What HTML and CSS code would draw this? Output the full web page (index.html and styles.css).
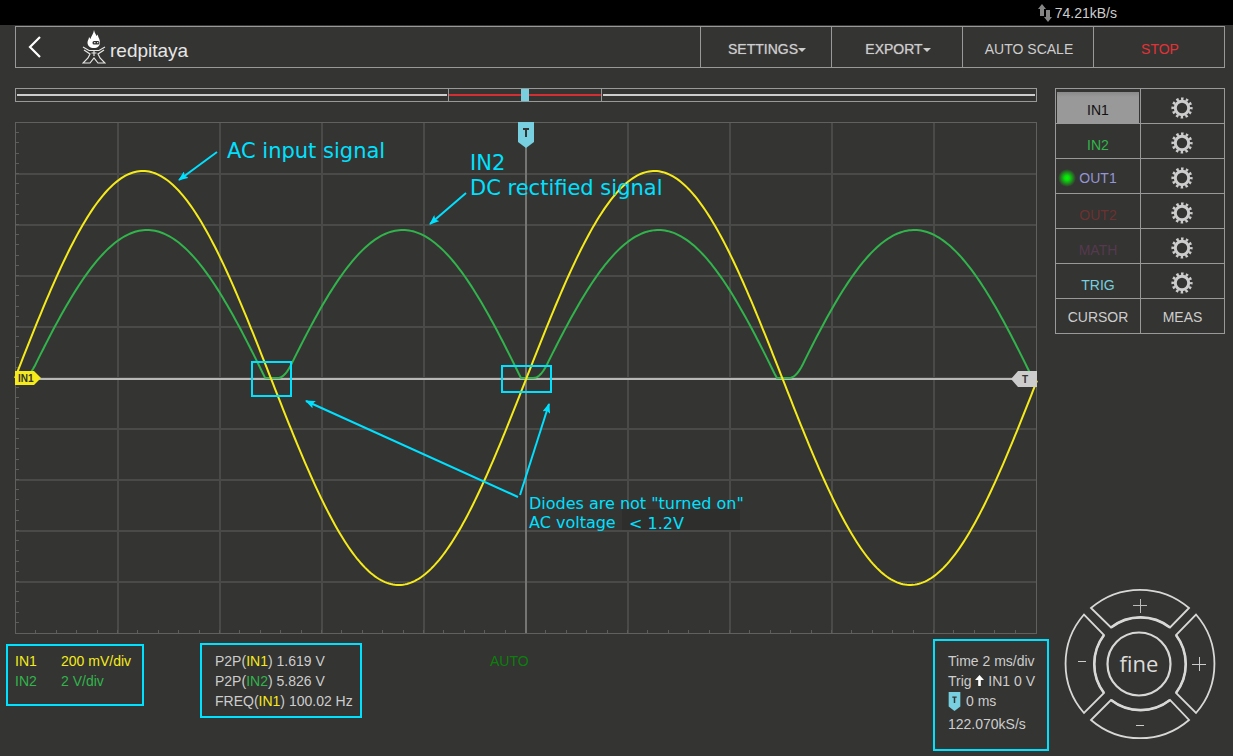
FILE: index.html
```html
<!DOCTYPE html>
<html lang="en">
<head>
  <meta charset="UTF-8">
  <meta name="viewport" content="width=device-width, initial-scale=1.0">
  <title>Red Pitaya Oscilloscope</title>
  <link rel="stylesheet" href="styles.css">
</head>
<body>
  <svg class="defs" width="0" height="0" aria-hidden="true">
    <symbol id="gear" viewBox="0 0 22 22">
      <circle cx="11" cy="11" r="6.7" fill="none" stroke="#cdcdcd" stroke-width="3"/>
      <circle cx="11" cy="11" r="9.2" fill="none" stroke="#cdcdcd" stroke-width="2.8" stroke-dasharray="2.5 2.317" stroke-dashoffset="1.25"/>
    </symbol>
    <symbol id="pin" viewBox="0 0 16 26">
      <path d="M0 0H16V20L8 26L0 20Z" fill="#77cfdf"/>
      <path d="M5 7H11M8 7V15" stroke="#343432" stroke-width="2" fill="none"/>
    </symbol>
  </svg>

  <div class="status-bar">
    <svg width="14" height="18" viewBox="0 0 14 18">
      <path d="M4 0L8 5H6V12H2V5H0Z" fill="#858585"/>
      <path d="M10 18L6 13H8V6H12V13H14Z" fill="#858585"/>
    </svg>
    <span>74.21kB/s</span>
  </div>

  <header class="navbar">
    <div class="brand">
      <a href="#" class="back" aria-label="Back">
        <svg width="14" height="24" viewBox="0 0 14 24"><path d="M12 2L2 12L12 22" fill="none" stroke="#fff" stroke-width="2.2"/></svg>
      </a>
      <a href="#" class="logo">
        <svg width="24" height="34" viewBox="0 0 24 34">
          <path d="M12 0C12.500 3 14 4 14.500 6L16 4.500C15.500 7 18 8.500 18 12.500C18 16 15.500 18 12 18C8 18 5.500 16 5.500 12.500C5.500 10 7 9.500 7 7L8.500 9C9 6 11.500 4 12 0Z" fill="#fff"/>
          <rect x="10.500" y="11" width="7" height="3.500" rx="1.500" fill="#343432"/>
          <path d="M12 12.700H13.500M15 12.700H16.300" stroke="#fff"/>
          <path d="M1 17L7 20.500H17L23 17M2 20L8 24L6 28L1 33H8L12 28L16 33H23L18 28L16 24L22 20M12 20V26M9.500 23H14.500" fill="none" stroke="#e6e6e6" stroke-width="1.200"/>
        </svg>
        <span>redpitaya</span>
      </a>
    </div>
    <button class="nav-btn strong">SETTINGS<i class="caret"></i></button>
    <button class="nav-btn strong">EXPORT<i class="caret"></i></button>
    <button class="nav-btn">AUTO SCALE</button>
    <button class="nav-btn stop">STOP</button>
  </header>

  <main class="scope">
    <section class="left">
      <div class="buffer">
        <div class="part"></div>
        <div class="part window"><span class="handle"></span></div>
        <div class="part"></div>
      </div>

      <svg class="plot" viewBox="0 0 1022 512">
        <defs>
          <marker id="arrow" viewBox="0 0 10 8" refX="9" refY="4" markerWidth="10" markerHeight="8" markerUnits="userSpaceOnUse" orient="auto">
            <path d="M0 0L10 4L0 8L2 4Z" fill="#00e0ff"/>
          </marker>
        </defs>
        <path id="grid" class="grid"/>
        <path id="ticks" class="ticks"/>
        <rect class="frame" x="0.5" y="0.5" width="1021" height="511"/>
        <path class="trig-line" d="M511 0V511"/>
        <path class="zero-line" d="M1 257H1021"/>
        <path id="ch2" class="wave green"/>
        <path id="ch1" class="wave yellow"/>

        <use href="#pin" x="503" y="0" width="16" height="26"/>
        <path d="M0 249H19L26 256L19 263H0Z" fill="#f5eb1b"/>
        <text class="tag" x="3" y="260">IN1</text>
        <path d="M1022 249H1003L996 257L1003 265H1022Z" fill="#ccc"/>
        <text class="tag" x="1007" y="261">T</text>

        <!-- notes -->
        <rect class="patch" x="607" y="387" width="118" height="21"/>
        <g class="note">
          <rect x="237" y="240" width="39" height="34"/>
          <rect x="487" y="244" width="49" height="26"/>
          <path d="M202 30L164 58"/>
          <path d="M451 71L415 102"/>
          <path d="M503 375L291 279"/>
          <path d="M505 373L534 282"/>
        </g>
        <text class="label" x="212" y="36">AC input signal</text>
        <text class="label" x="455" y="48">IN2</text>
        <text class="label" x="455" y="73">DC rectified signal</text>
        <text class="label small" x="514" y="387">Diodes are not "turned on"</text>
        <text class="label small" x="514" y="406">AC voltage</text>
        <text class="label small" x="614" y="407">&lt; 1.2V</text>
      </svg>

      <div class="readouts">
        <div class="box channels">
          <div class="yellow"><span>IN1</span>200 mV/div</div>
          <div class="green"><span>IN2</span>2 V/div</div>
        </div>
        <div class="box measures">
          <div>P2P(<span class="yellow">IN1</span>) 1.619 V</div>
          <div>P2P(<span class="green">IN2</span>) 5.826 V</div>
          <div>FREQ(<span class="yellow">IN1</span>) 100.02 Hz</div>
        </div>
        <div class="mode">AUTO</div>
        <div class="box timebase">
          <div>Time 2 ms/div</div>
          <div>Trig <svg width="9" height="11" viewBox="0 0 9 11"><path d="M4.500 0L9 5H5.800V11H3.200V5H0Z" fill="#fff"/></svg> IN1 0 V</div>
          <div class="delay"><svg width="13" height="19"><use href="#pin" width="13" height="19"/></svg>0 ms</div>
          <div>122.070kS/s</div>
        </div>
      </div>
    </section>

    <aside class="right">
      <div class="panel">
        <button class="active">IN1</button>
        <button aria-label="IN1 settings"><svg width="22" height="22"><use href="#gear"/></svg></button>
        <button class="in2">IN2</button>
        <button aria-label="IN2 settings"><svg width="22" height="22"><use href="#gear"/></svg></button>
        <button class="out1"><i class="led"></i>OUT1</button>
        <button aria-label="OUT1 settings"><svg width="22" height="22"><use href="#gear"/></svg></button>
        <button class="out2">OUT2</button>
        <button aria-label="OUT2 settings"><svg width="22" height="22"><use href="#gear"/></svg></button>
        <button class="math">MATH</button>
        <button aria-label="MATH settings"><svg width="22" height="22"><use href="#gear"/></svg></button>
        <button class="trig">TRIG</button>
        <button aria-label="TRIG settings"><svg width="22" height="22"><use href="#gear"/></svg></button>
        <button class="plain">CURSOR</button>
        <button class="plain">MEAS</button>
      </div>

      <div class="joystick">
        <svg class="ring" viewBox="0 0 150 150" aria-hidden="true">
          <g fill="none" stroke="#d8d8d6" stroke-width="1.800">
            <path d="M26 19A75 75 0 0 1 124 19L105 38.500A48 48 0 0 0 46 38.500Z"/>
            <path d="M131 25.500A75 75 0 0 1 131 124L111 104A48 48 0 0 0 111 46Z"/>
            <path d="M124 131A75 75 0 0 1 26 131L46 111A48 48 0 0 0 105 111Z"/>
            <path d="M19 124A75 75 0 0 1 19 25.500L39 46A48 48 0 0 0 39 104Z"/>
            <circle cx="74" cy="75" r="31.500" stroke-width="2.200"/>
            <path d="M46 38.500A48 48 0 0 1 105 38.500M111 46A48 48 0 0 1 111 104M105 111A48 48 0 0 1 46 111M39 104A48 48 0 0 1 39 46" stroke-width="2.600"/>
          </g>
        </svg>
        <button class="up" aria-label="Scale Y up"><svg width="14" height="14"><path d="M0 6.500H14M7.500 0V14" stroke="#bbb"/></svg></button>
        <button class="lt" aria-label="Scale X down"><svg width="8" height="14"><path d="M0 4.500H8" stroke="#ccc"/></svg></button>
        <button class="fine">fine</button>
        <button class="rt" aria-label="Scale X up"><svg width="14" height="14"><path d="M0 7.500H14M7.500 0V14" stroke="#ccc"/></svg></button>
        <button class="dn" aria-label="Scale Y down"><svg width="8" height="14"><path d="M0 9.500H8" stroke="#ccc"/></svg></button>
      </div>
    </aside>
  </main>

  <script>
    const W = 1022, H = 512, period = 511.5;

    // grid and ticks
    let grid = "", ticks = "";
    for (let i = 1; i < 10; i++) {
      grid += `M${Math.round(i * 102) + 1} 1V${H - 1}M1 ${Math.round(i * 51) + 1}H${W - 1}`;
    }
    for (let i = 1; i < 50; i++) {
      ticks += `M1 ${Math.round(i * 10.2) + 0.5}h3M${Math.round(i * 20.4) + 0.5} ${H - 1}v-3`;
    }
    document.getElementById("grid").setAttribute("d", grid);
    document.getElementById("ticks").setAttribute("d", ticks);

    function trace(id, fn) {
      let d = "";
      for (let x = 0; x <= W; x += 2) {
        d += (x ? "L" : "M") + x + " " + fn(x).toFixed(2);
      }
      document.getElementById(id).setAttribute("d", d);
    }

    // IN1: plain sine
    trace("ch1", x => 256 - 207 * Math.sin(2 * Math.PI * x / period));

    // IN2: rectified sine less the diode drop, with a soft turn-on
    trace("ch2", x => {
      const half = period / 2;
      const soft = 14;
      const pos = ((x - 132) % half + half * 1.5) % half - half / 2;
      let v = 168 * Math.cos(Math.PI * pos / half) - 20;
      if (pos < 0 && Math.abs(v) < soft) {
        v = (v + soft) * (v + soft) / (4 * soft);
      }
      return 256 - Math.max(v, 0);
    });
  </script>
</body>
</html>
```
FILE: styles.css
```css
* {
  box-sizing: border-box;
}
body {
  margin: 0;
  background: #343432;
  color: #cdcdcd;
  font-family: "Liberation Sans", Arial, sans-serif;
  font-size: 14px;
  line-height: 20px;
}
button {
  margin: 0;
  padding: 0;
  border: none;
  background: none;
  color: inherit;
  font: inherit;
  cursor: pointer;
}
a {
  color: inherit;
  text-decoration: none;
}
.defs {
  position: absolute;
}
.yellow {
  color: #f5eb1b;
}
.green {
  color: #31b44b;
}

/* top */
.status-bar {
  display: flex;
  justify-content: flex-end;
  align-items: center;
  gap: 3px;
  height: 25px;
  padding-right: 116px;
  background: #000;
}
.navbar {
  display: grid;
  grid-template-columns: 1fr repeat(4, 131px);
  height: 42px;
  margin: 1px 8px 0 15px;
  border: 1px solid #999;
}
.brand {
  display: flex;
  align-items: center;
  gap: 40px;
  padding-left: 12px;
}
.back {
  display: flex;
}
.logo {
  display: flex;
  align-items: center;
  gap: 4px;
  color: #e6e6e6;
  font-size: 19px;
}
.logo span {
  padding-top: 8px;
}
.nav-btn {
  padding: 3px 0 0 2px;
  border-left: 1px solid #999;
}
.strong {
  text-shadow: 0 0 1px #999;
}
.caret {
  display: inline-block;
  border: 4px solid transparent;
  border-top-color: #cdcdcd;
  border-bottom: 0;
  vertical-align: 2px;
}
.stop {
  color: #e23237;
}

/* graph side */
.scope {
  display: flex;
  gap: 18px;
  margin: 20px 8px 0 15px;
}
.left {
  flex: 1;
  min-width: 0;
}
.buffer {
  display: grid;
  grid-template-columns: 433fr 154fr 435fr;
  height: 14px;
  margin-bottom: 20px;
  border: 1px solid #999;
}
.part {
  display: flex;
  justify-content: center;
  background: linear-gradient(#cdcdcd, #cdcdcd) center / calc(100% - 2px) 2px no-repeat;
}
.window {
  border: solid #999;
  border-width: 0 1px;
  background: linear-gradient(#d22f35, #d22f35) center / 100% 2px no-repeat;
}
.handle {
  width: 8px;
  background: #77cfdf;
}
.plot {
  display: block;
  width: 100%;
  overflow: visible;
}
.grid {
  stroke: #4a4a49;
  stroke-width: 2;
}
.ticks {
  stroke: #5c5c5b;
}
.frame {
  fill: none;
  stroke: #60605f;
}
.trig-line {
  stroke: #757574;
  stroke-width: 2;
}
.zero-line {
  stroke: #b8b8b7;
  stroke-width: 2;
}
.wave {
  fill: none;
  stroke: currentColor;
  stroke-width: 2;
}
.tag {
  fill: #343432;
  font: bold 10px "Liberation Sans", Arial, sans-serif;
}
.patch {
  fill: #2e2e2c;
}
.note {
  fill: none;
  stroke: #00e0ff;
  stroke-width: 2;
}
.note path {
  marker-end: url(#arrow);
}
.label {
  fill: #00e0ff;
  font: 21px "DejaVu Sans", Verdana, sans-serif;
}
.small {
  font-size: 16px;
}

/* readouts */
.readouts {
  display: flex;
  align-items: flex-start;
  margin: 5px -12px 0 -9px;
}
.box {
  border: 2px solid #00e0ff;
  white-space: nowrap;
}
.channels {
  width: 138px;
  height: 62px;
  margin: 5px 56px 0 0;
  padding: 5px 7px;
}
.channels span {
  display: inline-block;
  width: 46px;
}
.measures {
  width: 162px;
  height: 75px;
  margin: 4px 128px 0 0;
  padding: 6px 13px;
}
.mode {
  margin-top: 12px;
  color: #0a800a;
}
.timebase {
  width: 116px;
  height: 112px;
  margin-left: auto;
  padding: 10px 13px;
}
.delay {
  display: flex;
  align-items: center;
  gap: 5px;
  height: 20px;
  margin-bottom: 3px;
}

/* channel panel */
.right {
  display: flex;
  flex-direction: column;
  justify-content: space-between;
  width: 170px;
}
.panel {
  display: grid;
  grid-template-columns: 85px 84px;
  grid-auto-rows: 35px;
  border: solid #999;
  border-width: 1px 0 0 1px;
}
.panel button {
  display: flex;
  align-items: center;
  justify-content: center;
  position: relative;
  padding-top: 7px;
  border: solid #999;
  border-width: 0 1px 1px 0;
}
.panel button:nth-child(even) {
  padding: 4px 1px 0 0;
}
.panel .active {
  padding-top: 7px;
  background: linear-gradient(#8a8a8a, #999 5px) 1px 3px / 82px 31px no-repeat;
  color: #111;
}
.panel .plain, .panel .plain:nth-child(even) {
  padding: 2px 0 0;
}
.in2 {
  color: #31b44b;
}
.panel .out1 {
  padding-top: 3px;
  color: #9595d6;
}
.out2 {
  color: #6b3231;
}
.math {
  color: #56394f;
}
.trig {
  color: #77cfdf;
}
.led {
  position: absolute;
  left: 2px;
  top: 10px;
  width: 18px;
  height: 18px;
  border-radius: 50%;
  background: radial-gradient(circle closest-side, #00fa00, #0be00b 25%, #343432);
}

/* joystick */
.joystick {
  position: relative;
  display: grid;
  grid-template-columns: 33px 1fr 33px;
  grid-template-rows: 33px 1fr 33px;
  grid-template-areas: ". up ." "lt fine rt" ". dn .";
  width: 150px;
  height: 150px;
  margin: 0 auto 12px;
}
.ring {
  position: absolute;
  width: 150px;
  height: 150px;
  pointer-events: none;
  overflow: visible;
}
.joystick button {
  display: flex;
  align-items: center;
  justify-content: center;
}
.up {
  grid-area: up;
}
.lt {
  grid-area: lt;
}
.rt {
  grid-area: rt;
}
.dn {
  grid-area: dn;
}
.joystick .fine {
  grid-area: fine;
  padding: 0 2px 3px 0;
  color: #dcdcda;
  font-family: "Open Sans", "Noto Sans", sans-serif;
  font-size: 22px;
  font-weight: 500;
}
```
